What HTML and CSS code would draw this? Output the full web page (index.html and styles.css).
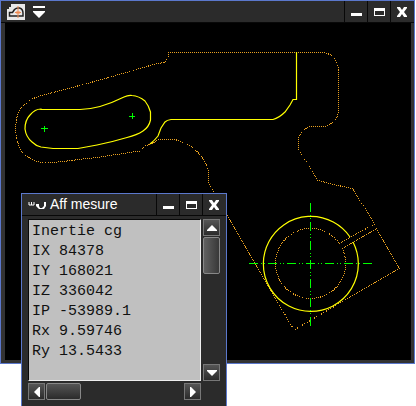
FILE: index.html
```
<!DOCTYPE html>
<html lang="fr">
<head>
  <meta charset="UTF-8">
  <title>Aff mesure</title>
  <link rel="stylesheet" href="styles.css">
</head>
<body>
  <div class="desktop">
    <section class="window main">
      <header class="titlebar">
        <button class="app-icon" aria-label="Application">
          <svg width="20" height="18" viewBox="0 0 20 18">
            <path d="M5 1h14v16H1V6h2V4h2z" fill="#e8e8e8"/>
            <path d="M3.500 13V9.500h3l2-3q2-2 5-1.500q3.500 1 3.500 5V13z" fill="none" stroke="#222" stroke-width="1.500"/>
            <path d="M12 3v12M9 9.500h6M10.500 8l3 3M13.500 8l-3 3" stroke="#f08a50"/>
          </svg>
        </button>
        <button class="menu-icon" aria-label="Menu">
          <svg width="12" height="12" viewBox="0 0 12 12"><path d="M0 0h12v2H0zM0 5h12v1l-6 6l-6-6z" fill="#fff"/></svg>
        </button>
        <span class="title"></span>
        <button class="ctl" aria-label="Réduire"><svg width="12" height="10" viewBox="0 0 12 10"><path d="M1 6h11v3H1z" fill="#fff"/></svg></button>
        <button class="ctl" aria-label="Agrandir"><svg width="12" height="10" viewBox="0 0 12 10"><path fill-rule="evenodd" d="M1 1h11v8H1zM2 4v4h9V4z" fill="#fff"/></svg></button>
        <button class="ctl" aria-label="Fermer"><svg width="12" height="10" viewBox="0 0 12 10"><path d="M1 0h3l2 3l2-3h3v1L8 5l3 4v1H8L6 7l-2 3H1V9l3-4l-3-4z" fill="#fff"/></svg></button>
      </header>
      <div class="view">
        <svg class="drawing" viewBox="5 23 406 337">
          <!-- contour -->
          <g class="hidden-line">
            <path d="M155 142L145 146L140 151L133 152L100 157L67 161L50 163Q40 163 33 160Q27 157 23 153Q19 147 17 140Q15 131 16 123Q17 115 20 110Q23 105 28 102Q33 98 40 96L100 80L152 65L165 62L168 58V52.500H322Q328 53 332 56Q337 60 338.500 70V110Q338 117 334 121Q330 125 325 126.500H312Q306 127 303 131Q299 135 298 140V148L317.500 180.500L353 189L374.500 224L339.500 243.500"/>
            <path d="M342 249L376.500 228.500L399.500 268.500L294 330L227 215L209 183L208 170Q206 163 201 156Q197 151 193 148Q187 144 180 141Q174 139 168 139L157 140L151 144"/>
            <path d="M342 248A35 35 0 1 1 339 243"/>
          </g>
          <g class="solid-line">
            <path d="M41 109.500H80Q91 109 100 106.500Q112 103 124 97Q128 95 132 95.500Q139 96 145 101Q149 106 150.500 112V120Q149 127 143 131Q137 135 127 137.500Q112 142 97 145L78 148.500H53L41 147Q36 146 32 142Q26 137 25 129Q25 120 30 115Q35 109 41 109Z"/>
            <path d="M296.500 52V99.500H293L290 105L285 112Q279 118 273 119.500H171Q167 120 165 122L161 128L158 136Q155 140 150 144"/>
            <path d="M353 242A47.500 47.500 0 1 1 350 237"/>
          </g>
          <!-- axes -->
          <g class="axis">
            <path d="M249 263.500H373M310.500 203V327" stroke-dasharray="9 3 1 2 1 3"/>
            <path d="M41 128.500H48M44.500 126V132M129 116.500H135M132.500 113V119"/>
          </g>
        </svg>
      </div>
    </section>

    <section class="window dialog">
      <header class="titlebar">
        <svg class="gauge" width="18" height="12" viewBox="0 0 18 12">
          <path d="M1 3v3h5V3M3.500 3v3" fill="none" stroke="#fff"/>
          <path d="M8 5h3v2l1 2h2l2-2V3h2v4l-2 3h-5L8 7z" fill="#fff"/>
        </svg>
        <h1 class="title">Aff mesure</h1>
        <button class="ctl" aria-label="Réduire"><svg width="12" height="10" viewBox="0 0 12 10"><path d="M1 6h11v3H1z" fill="#fff"/></svg></button>
        <button class="ctl" aria-label="Agrandir"><svg width="12" height="10" viewBox="0 0 12 10"><path fill-rule="evenodd" d="M1 1h11v8H1zM2 4v4h9V4z" fill="#fff"/></svg></button>
        <button class="ctl" aria-label="Fermer"><svg width="12" height="10" viewBox="0 0 12 10"><path d="M1 0h3l2 3l2-3h3v1L8 5l3 4v1H8L6 7l-2 3H1V9l3-4l-3-4z" fill="#fff"/></svg></button>
      </header>
      <div class="panel">
        <pre class="output">Inertie cg
IX 84378
IY 168021
IZ 336042
IP -53989.1
Rx 9.59746
Ry 13.5433</pre>
        <div class="scroll vertical">
          <button class="arrow" aria-label="Haut"><svg width="10" height="6" viewBox="0 0 10 6"><path d="M5 0l5 5v1H0V5z" fill="#fff"/></svg></button>
          <div class="thumb"></div>
          <button class="arrow last" aria-label="Bas"><svg width="10" height="6" viewBox="0 0 10 6"><path d="M5 6l5-5V0H0v1z" fill="#fff"/></svg></button>
        </div>
        <div class="scroll horizontal">
          <button class="arrow" aria-label="Gauche"><svg width="6" height="10" viewBox="0 0 6 10"><path d="M0 5l5-5h1v10H5z" fill="#fff"/></svg></button>
          <div class="thumb"></div>
          <button class="arrow last" aria-label="Droite"><svg width="6" height="10" viewBox="0 0 6 10"><path d="M6 5L1 0H0v10h1z" fill="#fff"/></svg></button>
        </div>
      </div>
    </section>
  </div>
</body>
</html>
```
FILE: styles.css
```
* { box-sizing: border-box; }
body { margin: 0; background: #fff; font-family: "Liberation Sans", Arial, sans-serif; }
button { padding: 0; border: 0; background: none; }
svg { display: block; }

.desktop { position: relative; min-height: 100vh; padding-right: 1px; }
.window { border: 1px solid #5b78cc; background: #2b2b2b; }

.titlebar {
  display: flex;
  height: 22px;
  padding-right: 1px;
  background: #2b2b2b;
  border-bottom: 1px solid #080808;
}
.title { flex: 1; margin: 0; font-size: 14px; font-weight: normal; line-height: 20px; color: #fff; }
.app-icon { margin: 0 7px 0 5px; }
.ctl {
  display: flex;
  align-items: center;
  justify-content: center;
  width: 23px;
  border-left: 1px solid #080808;
}

/* dessin */
.view { padding: 0 3px 3px 4px; background: #333; }
.drawing { width: 100%; background: #000; }
.drawing path { fill: none; }
.hidden-line { stroke: #e8a020; stroke-dasharray: 1 1; shape-rendering: crispEdges; }
.solid-line { stroke: #ff0; stroke-width: 1.2; }
.axis { stroke: #0f0; shape-rendering: crispEdges; }

/* fenetre de mesure */
.dialog { position: absolute; left: 21px; top: 193px; width: 206px; }
.gauge { margin: 5px 4px 0 6px; }
.panel {
  display: grid;
  grid-template-columns: 1fr 17px;
  gap: 2px;
  padding: 3px 6px 6px;
}
.output {
  margin: 0;
  padding: 2px 3px 18px;
  background: #c0c0c0;
  border: 1px solid #080808;
  border-right-color: #eee;
  border-bottom-color: #eee;
  font: 15px/20px "Liberation Mono", monospace;
  color: #111;
}
.scroll { display: flex; gap: 1px; }
.vertical { flex-direction: column; }
.arrow {
  display: flex;
  align-items: center;
  justify-content: center;
  width: 17px;
  height: 17px;
  background: linear-gradient(#555, #2b2b2b);
  border: 1px solid #777;
}
.thumb { border: 1px solid #888; border-radius: 2px; background: linear-gradient(90deg, #606060, #383838); }
.vertical .thumb { height: 37px; }
.horizontal .thumb { width: 35px; background: linear-gradient(#555, #2b2b2b); }
.vertical .last { margin-top: auto; }
.horizontal .last { margin-left: auto; }
```
